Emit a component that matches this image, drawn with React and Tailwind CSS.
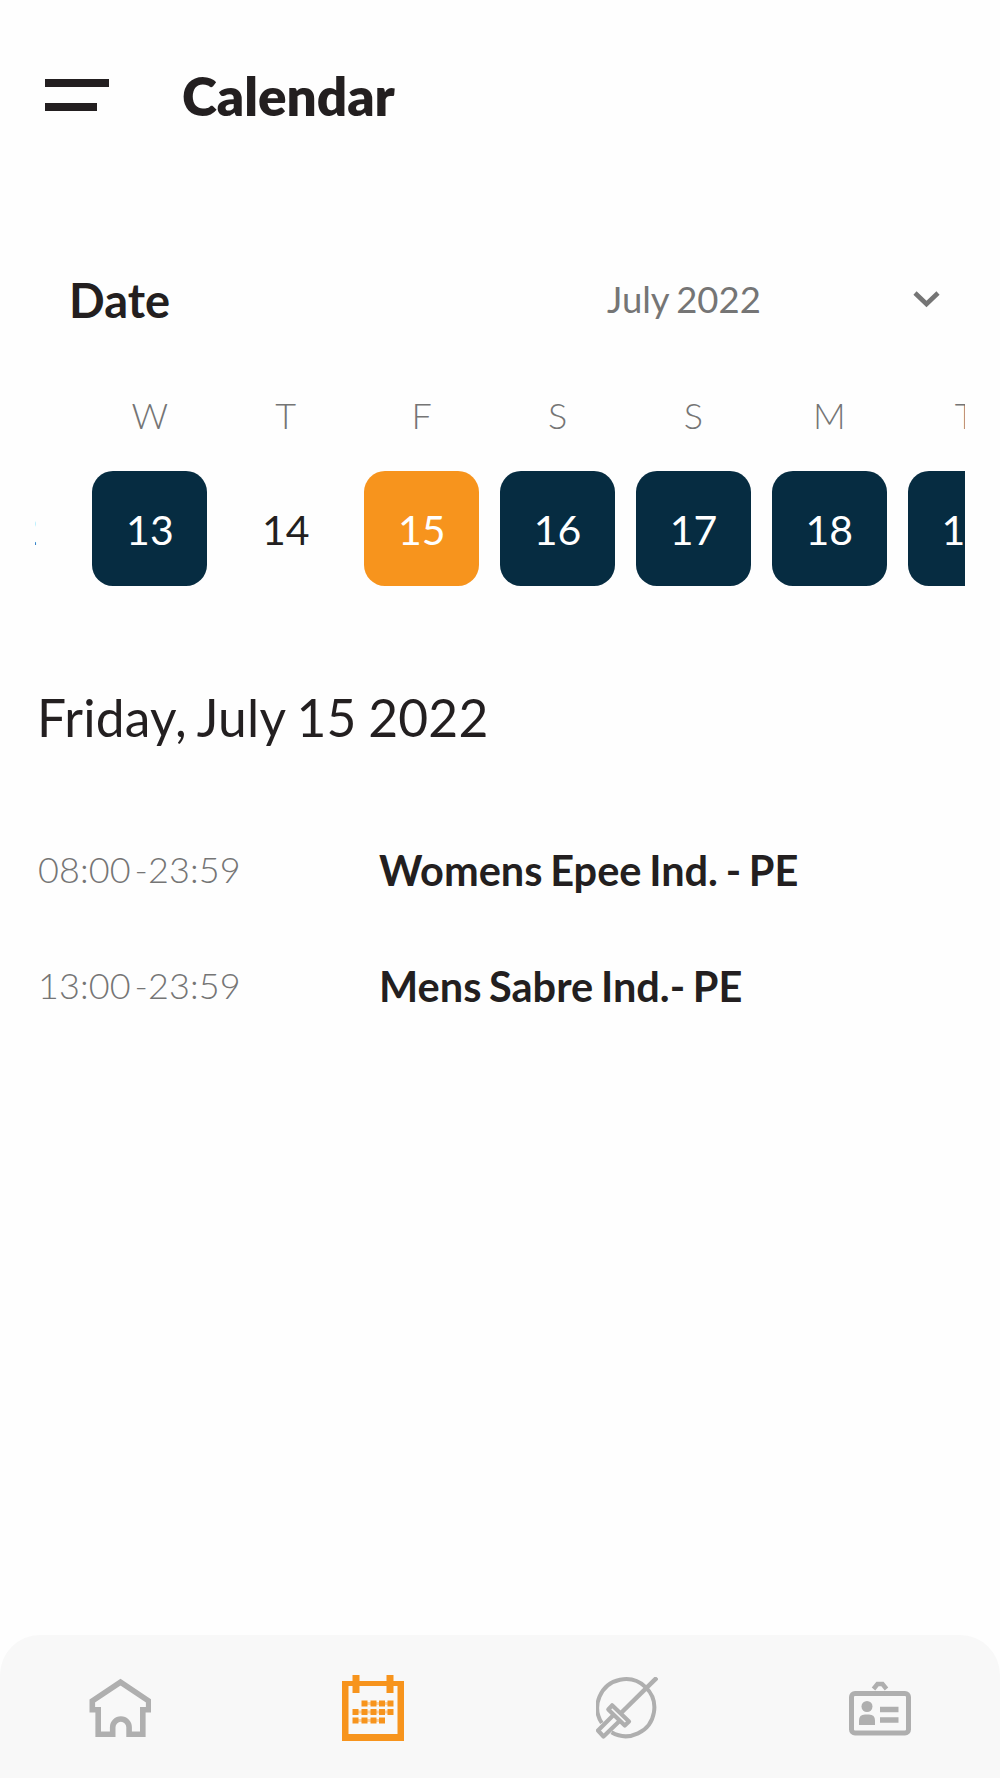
import React, { useState } from "react";

const days = [
  { letter: "", date: 12, busy: false },
  { letter: "W", date: 13, busy: true },
  { letter: "T", date: 14, busy: false },
  { letter: "F", date: 15, busy: true },
  { letter: "S", date: 16, busy: true },
  { letter: "S", date: 17, busy: true },
  { letter: "M", date: 18, busy: true },
  { letter: "T", date: 19, busy: true },
];

const events = [
  { time: "08:00 -23:59", title: "Womens Epee Ind. - PE" },
  { time: "13:00 -23:59", title: "Mens Sabre Ind.- PE" },
];

function HomeIcon() {
  return (
    <svg viewBox="0 1 62 60" className="w-[62px] h-[60px]" fill="none" stroke="currentColor" strokeWidth="5.6">
      <path d="M3.3 35.5V24L31.500 5.2L59.700 24V32.7H53.800V57.2H40.100V50.2A8.2 8.2 0 0 0 23.700 50.2V57.2H9.200V32.7H3.3" />
    </svg>
  );
}

function CalendarIcon() {
  return (
    <svg viewBox="0 0 62 66" className="w-[62px] h-[66px]" fill="currentColor">
      <path fillRule="evenodd" d="M0 6H62V66H0ZM6.5 11V59H55.5V11Z" />
      <path d="M10.5 0H17.5V18H10.5ZM44.5 0H51.5V18H44.5Z" />
      <path d="M19.5 25.5h6v6h-6zM28.5 25.5h6v6h-6zM37 25.5h6v6h-6zM45.5 25.5h6v6h-6z" />
      <path d="M10.5 34h6v6h-6zM19.5 34h6v6h-6zM28.5 34h6v6h-6zM37 34h6v6h-6zM45.5 34h6v6h-6z" />
      <path d="M10.5 42.5h6v6h-6zM19.5 42.5h6v6h-6zM28.5 42.5h6v6h-6zM37 42.5h6v6h-6z" />
      <path d="M12 35.5h38v3h-38zM20 27h30v3h-30zM12 44h29v3h-29z" opacity="0.4" />
    </svg>
  );
}

function FencingIcon() {
  return (
    <svg viewBox="0.5 0 62 62" className="w-[62px] h-[62px]" fill="none" stroke="currentColor" strokeWidth="4">
      <path d="M6.3 46A28.5 28.5 0 1 1 16 55.3" />
      <path d="M61.5 0.5L25.5 36" strokeWidth="4.5" />
      <path d="M16.6 28.3L33.5 44.5L29.3 48.5L12.8 32.5Z" strokeWidth="4.2" strokeLinejoin="round" />
      <path d="M17.5 38.5L2.5 53.5L8 59.5L23.5 44.5" strokeWidth="4.2" strokeLinejoin="round" />
    </svg>
  );
}

function BadgeIcon() {
  return (
    <svg viewBox="0 0 62 56" className="w-[62px] h-[56px]" fill="none" stroke="currentColor">
      <rect x="2.5" y="13.5" width="57" height="39.5" rx="3.5" strokeWidth="5" />
      <path d="M24.5 9L28.5 4H33.5L37.500 9" strokeWidth="4.5" />
      <circle cx="18" cy="26.5" r="5.5" fill="currentColor" stroke="none" />
      <path d="M10 45V40.5Q10 34.5 16 34.5H20Q26 34.5 26 40.5V45Z" fill="currentColor" stroke="none" />
      <path d="M31 29.5H49.5M31 40H49.5" strokeWidth="5.5" />
    </svg>
  );
}

const tabs = [
  { id: "home", label: "Home", Icon: HomeIcon },
  { id: "calendar", label: "Calendar", Icon: CalendarIcon },
  { id: "fencing", label: "Fencing", Icon: FencingIcon },
  { id: "badge", label: "Accreditation", Icon: BadgeIcon },
];

export default function App() {
  const [selected, setSelected] = useState(15);
  const [tab, setTab] = useState("calendar");

  const dayStyle = (day) => {
    if (day.date === selected) return "bg-[#f7941d] text-white";
    if (day.busy) return "bg-[#062c41] text-white";
    return "text-[#231f20]";
  };

  return (
    <div className="w-[1000px] h-[1778px] flex flex-col bg-[#fefefe] text-[#231f20] font-['Lato',sans-serif] antialiased overflow-hidden">
      {/* Header */}
      <header className="flex items-center h-[60px] mt-[65px] pl-[45px]">
        <button aria-label="Menu" className="flex flex-col gap-4 w-16 shrink-0">
          <span className="w-16 h-2 bg-[#231f20]" />
          <span className="w-[52px] h-2 bg-[#231f20]" />
        </button>
        <h1 className="ml-[73px] pt-0.5 text-[53px] leading-[60px] font-extrabold">Calendar</h1>
      </header>

      {/* Month picker */}
      <div className="flex items-center h-[60px] mt-36 pl-[69px] pr-[60px]">
        <h2 className="pt-px text-[47px] leading-[60px] font-bold">Date</h2>
        <button className="ml-auto flex items-center justify-between w-[333px] text-[#757575]">
          <span className="text-[36.5px] leading-[60px] [word-spacing:-2px]">July 2022</span>
          <svg viewBox="0 0 27 18" className="w-[27px] h-[18px] shrink-0" fill="none" stroke="currentColor" strokeWidth="4.6">
            <path d="M2 3L13.5 14L25 3" />
          </svg>
        </button>
      </div>

      {/* Day strip */}
      <div className="mx-[35px] mt-16 overflow-hidden">
        <div className="flex gap-[20.9px] -ml-[78.5px]">
          {days.map((day) => (
            <button key={day.date} onClick={() => setSelected(day.date)} className="w-[115px] shrink-0 flex flex-col items-center">
              <span className="h-[44px] text-4xl leading-[44px] font-light text-[#757575]">{day.letter}</span>
              <span className={`mt-[33.5px] w-[115px] h-[115px] rounded-[21px] flex items-center justify-center text-[41px] pt-[3px] ${dayStyle(day)}`}>
                {day.date}
              </span>
            </button>
          ))}
        </div>
      </div>

      {/* Schedule */}
      <main className="flex-1 pl-[37px] pr-9 pt-[101px]">
        <h3 className="text-[51.5px] leading-[60px] tracking-[0.25px] [word-spacing:-2px]">Friday, July 15 2022</h3>
        <ul className="mt-[92px] flex flex-col gap-14">
          {events.map((event) => (
            <li key={event.title} className="flex items-center h-[60px]">
              <span className="w-[342px] pl-px text-4xl font-light text-[#757575] tracking-[0.1px] [word-spacing:-6px]">{event.time}</span>
              <span className="pt-[3px] text-[41.5px] leading-[60px] font-bold [word-spacing:-2.4px]">{event.title}</span>
            </li>
          ))}
        </ul>
      </main>

      {/* Bottom tabs */}
      <nav className="h-[143px] shrink-0 rounded-t-[40px] bg-[#f8f8f8] flex items-center justify-between px-[89px] pt-0.5">
        {tabs.map(({ id, label, Icon }) => (
          <button key={id} aria-label={label} onClick={() => setTab(id)} className={tab === id ? "text-[#f7941d]" : "text-[#afafaf]"}>
            <Icon />
          </button>
        ))}
      </nav>
    </div>
  );
}
